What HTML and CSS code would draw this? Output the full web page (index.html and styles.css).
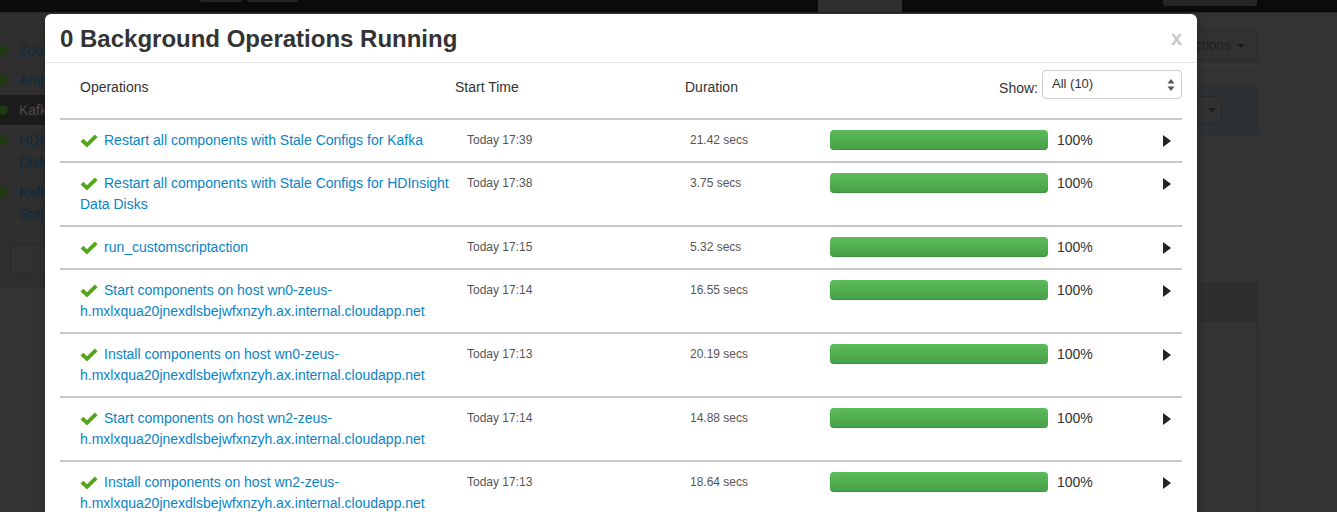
FILE: index.html
```html
<!DOCTYPE html>
<html>
<head>
<meta charset="utf-8">
<title>Background Operations</title>
<link rel="stylesheet" href="styles.css">
</head>
<body>
<div class="page">
  <div class="navbar">
    <span class="nbtn nb1"></span>
    <span class="nbtn nb2"></span>
    <span class="nav-active"></span>
    <span class="nbtn nb3"></span>
  </div>
  <div class="content">
    <aside class="sidebar">
      <ul class="svc-list">
        <li class="svc"><span class="dot"></span><span>Zookeeper</span></li>
        <li class="svc"><span class="dot"></span><span>Ambari Metrics</span></li>
        <li class="svc active"><span class="dot"></span><span>Kafka</span></li>
        <li class="svc"><span class="dot"></span><span>HDInsight<br>Disks</span></li>
        <li class="svc"><span class="dot"></span><span>Kafka<br>Storage</span></li>
      </ul>
      <div class="side-btn"></div>
    </aside>
    <main class="main">
      <div class="svc-actions">Service Actions <span class="caret"></span></div>
      <div class="main-rule"></div>
      <div class="summary-panel"><div class="panel-btn"><span class="caret"></span></div></div>
      <div class="box"><div class="box-head"></div></div>
    </main>
  </div>
</div>

<div class="modal">
  <div class="modal-header">
    <h3 class="modal-title">0 Background Operations Running</h3>
    <span class="close">x</span>
  </div>
  <div class="modal-body">
    <div class="ops-head">
      <div class="h-ops">Operations</div>
      <div class="h-time">Start Time</div>
      <div class="h-dur">Duration</div>
      <div class="h-show">
        <span class="show-label">Show:</span>
        <div class="select">All (10)
          <svg class="sel-arrows" width="8" height="14" viewBox="0 0 8 14"><path d="M4 1 L7.5 5.5 L0.5 5.5 Z M4 13 L7.5 8.5 L0.5 8.5 Z" fill="#555"/></svg>
        </div>
      </div>
    </div>

    <div class="op-row">
      <div class="op-name"><svg class="chk" width="18" height="14" viewBox="0 0 18 14"><path d="M0.5 7.5 L3.5 4.8 L7 8.2 L14.8 0.5 L17.6 3.3 L7 13.6 Z" fill="#57a51c"/></svg><a>Restart all components with Stale Configs for Kafka</a></div>
      <div class="op-time">Today 17:39</div>
      <div class="op-dur">21.42 secs</div>
      <div class="op-prog"><div class="bar"></div><span class="pct">100%</span></div>
      <div class="op-arrow"><span class="tri"></span></div>
    </div>

    <div class="op-row">
      <div class="op-name"><svg class="chk" width="18" height="14" viewBox="0 0 18 14"><path d="M0.5 7.5 L3.5 4.8 L7 8.2 L14.8 0.5 L17.6 3.3 L7 13.6 Z" fill="#57a51c"/></svg><a>Restart all components with Stale Configs for HDInsight Data Disks</a></div>
      <div class="op-time">Today 17:38</div>
      <div class="op-dur">3.75 secs</div>
      <div class="op-prog"><div class="bar"></div><span class="pct">100%</span></div>
      <div class="op-arrow"><span class="tri"></span></div>
    </div>

    <div class="op-row">
      <div class="op-name"><svg class="chk" width="18" height="14" viewBox="0 0 18 14"><path d="M0.5 7.5 L3.5 4.8 L7 8.2 L14.8 0.5 L17.6 3.3 L7 13.6 Z" fill="#57a51c"/></svg><a>run_customscriptaction</a></div>
      <div class="op-time">Today 17:15</div>
      <div class="op-dur">5.32 secs</div>
      <div class="op-prog"><div class="bar"></div><span class="pct">100%</span></div>
      <div class="op-arrow"><span class="tri"></span></div>
    </div>

    <div class="op-row">
      <div class="op-name"><svg class="chk" width="18" height="14" viewBox="0 0 18 14"><path d="M0.5 7.5 L3.5 4.8 L7 8.2 L14.8 0.5 L17.6 3.3 L7 13.6 Z" fill="#57a51c"/></svg><a>Start components on host wn0-zeus-h.mxlxqua20jnexdlsbejwfxnzyh.ax.internal.cloudapp.net</a></div>
      <div class="op-time">Today 17:14</div>
      <div class="op-dur">16.55 secs</div>
      <div class="op-prog"><div class="bar"></div><span class="pct">100%</span></div>
      <div class="op-arrow"><span class="tri"></span></div>
    </div>

    <div class="op-row">
      <div class="op-name"><svg class="chk" width="18" height="14" viewBox="0 0 18 14"><path d="M0.5 7.5 L3.5 4.8 L7 8.2 L14.8 0.5 L17.6 3.3 L7 13.6 Z" fill="#57a51c"/></svg><a>Install components on host wn0-zeus-h.mxlxqua20jnexdlsbejwfxnzyh.ax.internal.cloudapp.net</a></div>
      <div class="op-time">Today 17:13</div>
      <div class="op-dur">20.19 secs</div>
      <div class="op-prog"><div class="bar"></div><span class="pct">100%</span></div>
      <div class="op-arrow"><span class="tri"></span></div>
    </div>

    <div class="op-row">
      <div class="op-name"><svg class="chk" width="18" height="14" viewBox="0 0 18 14"><path d="M0.5 7.5 L3.5 4.8 L7 8.2 L14.8 0.5 L17.6 3.3 L7 13.6 Z" fill="#57a51c"/></svg><a>Start components on host wn2-zeus-h.mxlxqua20jnexdlsbejwfxnzyh.ax.internal.cloudapp.net</a></div>
      <div class="op-time">Today 17:14</div>
      <div class="op-dur">14.88 secs</div>
      <div class="op-prog"><div class="bar"></div><span class="pct">100%</span></div>
      <div class="op-arrow"><span class="tri"></span></div>
    </div>

    <div class="op-row">
      <div class="op-name"><svg class="chk" width="18" height="14" viewBox="0 0 18 14"><path d="M0.5 7.5 L3.5 4.8 L7 8.2 L14.8 0.5 L17.6 3.3 L7 13.6 Z" fill="#57a51c"/></svg><a>Install components on host wn2-zeus-h.mxlxqua20jnexdlsbejwfxnzyh.ax.internal.cloudapp.net</a></div>
      <div class="op-time">Today 17:13</div>
      <div class="op-dur">18.64 secs</div>
      <div class="op-prog"><div class="bar"></div><span class="pct">100%</span></div>
      <div class="op-arrow"><span class="tri"></span></div>
    </div>
  </div>
</div>
</body>
</html>
```

FILE: styles.css
```css
html, body {
  margin: 0;
  padding: 0;
  height: 100%;
  overflow: hidden;
}
body {
  background: #333333;
  font-family: "Liberation Sans", Arial, Helvetica, sans-serif;
  font-size: 14px;
  color: #333;
}

/* ---------- dimmed page behind the modal ---------- */
.page {
  height: 100%;
  display: flex;
  flex-direction: column;
}
.navbar {
  height: 12px;
  flex: none;
  background: #0b0b0b;
  border-bottom: 1px solid #262626;
  display: flex;
  align-items: flex-start;
  padding-left: 200px;
}
.nbtn {
  display: block;
  background: #262626;
  border-radius: 0 0 3px 3px;
}
.nb1 { width: 42px; height: 2px; }
.nb2 { width: 51px; height: 2px; margin-left: 5px; }
.nav-active {
  display: block;
  width: 84px;
  height: 12px;
  margin-left: 520px;
  background: #2f2f2f;
}
.nb3 { width: 94px; height: 6px; margin-left: 261px; }

.content {
  flex: 1;
  display: flex;
}
.sidebar {
  width: 230px;
  flex: none;
  height: 274px;
  background: #2f2f2f;
  border-bottom: 1px solid #292929;
  padding-top: 22px;
  box-sizing: border-box;
}
.svc-list {
  list-style: none;
  margin: 0;
  padding: 0;
}
.svc {
  display: flex;
  align-items: flex-start;
  gap: 11px;
  padding: 4px 0;
  line-height: 22px;
  color: #0c2a40;
  font-size: 14px;
}
.svc.active {
  background: #1c1c1c;
  color: #4a4a4a;
}
.dot {
  width: 10px;
  height: 10px;
  border-radius: 50%;
  background: #1d3a10;
  margin-top: 6px;
  margin-left: -2px;
  flex: none;
}
.side-btn {
  margin: 15px 10px 0;
  height: 28px;
  border: 1px solid #282828;
  border-radius: 4px;
  background: #313131;
}

.main {
  flex: 1;
  display: flex;
  flex-direction: column;
  align-items: flex-end;
  padding-right: 79px;
  padding-left: 20px;
}
.svc-actions {
  margin-top: 17px;
  height: 29px;
  line-height: 29px;
  padding: 0 12px;
  background: #313131;
  border: 1px solid #2a2a2a;
  border-radius: 4px;
  color: #1f1f1f;
  font-size: 14px;
}
.caret {
  display: inline-block;
  width: 0;
  height: 0;
  border-left: 4px solid transparent;
  border-right: 4px solid transparent;
  border-top: 4px solid #1a1a1a;
  vertical-align: middle;
  margin-left: 2px;
}
.main-rule {
  align-self: stretch;
  border-top: 1px solid #3a3a3a;
  margin-top: 4px;
}
.summary-panel {
  margin-top: 20px;
  align-self: stretch;
  height: 46px;
  background: #2e3133;
  border: 1px solid #2b2e30;
  border-radius: 4px;
  display: flex;
  justify-content: flex-end;
  align-items: center;
  padding-right: 35px;
}
.panel-btn {
  width: 60px;
  height: 28px;
  border: 1px solid #282828;
  border-radius: 4px;
  background: #313131;
  display: flex;
  align-items: center;
  justify-content: flex-end;
  padding-right: 5px;
  box-sizing: border-box;
}
.box {
  margin-top: 149px;
  align-self: stretch;
  flex: 1;
  border: 1px solid #2b2b2b;
  border-bottom: none;
}
.box-head {
  height: 37px;
  background: #2e2e2e;
  border-bottom: 1px solid #2a2a2a;
}

/* ---------- modal ---------- */
.modal {
  position: absolute;
  left: 45px;
  top: 14px;
  width: 1152px;
  height: 540px;
  background: #fff;
  border-radius: 6px 6px 0 0;
  box-shadow: 0 3px 7px rgba(0, 0, 0, 0.3);
}
.modal-header {
  height: 48px;
  border-bottom: 1px solid #e5e5e5;
  display: flex;
  align-items: center;
  justify-content: space-between;
  padding: 0 15px;
}
.modal-title {
  margin: 0;
  font-size: 24px;
  font-weight: bold;
  color: #333;
  line-height: 30px;
  margin-top: 2px;
}
.close {
  font-size: 20px;
  font-weight: bold;
  color: #c8c8c8;
  line-height: 20px;
}
.modal-body {
  padding: 0 15px;
}
.ops-head,
.op-row {
  display: grid;
  grid-template-columns: 395px 230px 145px 1fr 32px;
}
.ops-head {
  height: 55px;
  box-sizing: border-box;
  padding-top: 7px;
  align-items: start;
}
.h-ops, .h-time, .h-dur {
  padding-top: 7px;
  line-height: 20px;
  font-size: 14px;
  color: #333;
}
.h-ops { padding-left: 20px; }
.h-show {
  grid-column: 4 / 6;
  display: flex;
  justify-content: flex-end;
  align-items: flex-start;
  gap: 4px;
}
.show-label {
  padding-top: 8px;
  line-height: 20px;
}
.select {
  width: 140px;
  height: 29px;
  box-sizing: border-box;
  border: 1px solid #cccccc;
  border-radius: 4px;
  padding: 0 9px;
  line-height: 26px;
  font-size: 13px;
  color: #333;
  display: flex;
  justify-content: space-between;
  align-items: flex-start;
}
.sel-arrows {
  margin-top: 7px;
  margin-right: -3px;
}

.op-row {
  border-top: 2px solid #c8c8c8;
  padding: 10px 0;
  line-height: 21px;
}
.op-name {
  padding-left: 20px;
  font-size: 14px;
  padding-right: 2px;
}
.op-name a {
  color: #0a84c8;
  text-decoration: none;
}
.chk {
  vertical-align: -3px;
  margin-right: 6px;
}
.op-time, .op-dur {
  font-size: 12px;
  color: #555;
  line-height: 19px;
  padding-top: 1px;
}
.op-time { padding-left: 12px; }
.op-dur { padding-left: 5px; }
.op-prog {
  display: flex;
  align-items: flex-start;
  gap: 9px;
}
.bar {
  width: 218px;
  height: 20px;
  border-radius: 4px;
  background: linear-gradient(to bottom, #5cbc5a, #46a046);
  box-shadow: inset 0 -1px 0 rgba(0, 0, 0, 0.1);
}
.pct {
  font-size: 14px;
  color: #333;
  line-height: 20px;
}
.op-arrow {
  padding-left: 13px;
  padding-top: 5px;
}
.tri {
  display: block;
  width: 0;
  height: 0;
  border-top: 6px solid transparent;
  border-bottom: 6px solid transparent;
  border-left: 8px solid #222;
}
```
